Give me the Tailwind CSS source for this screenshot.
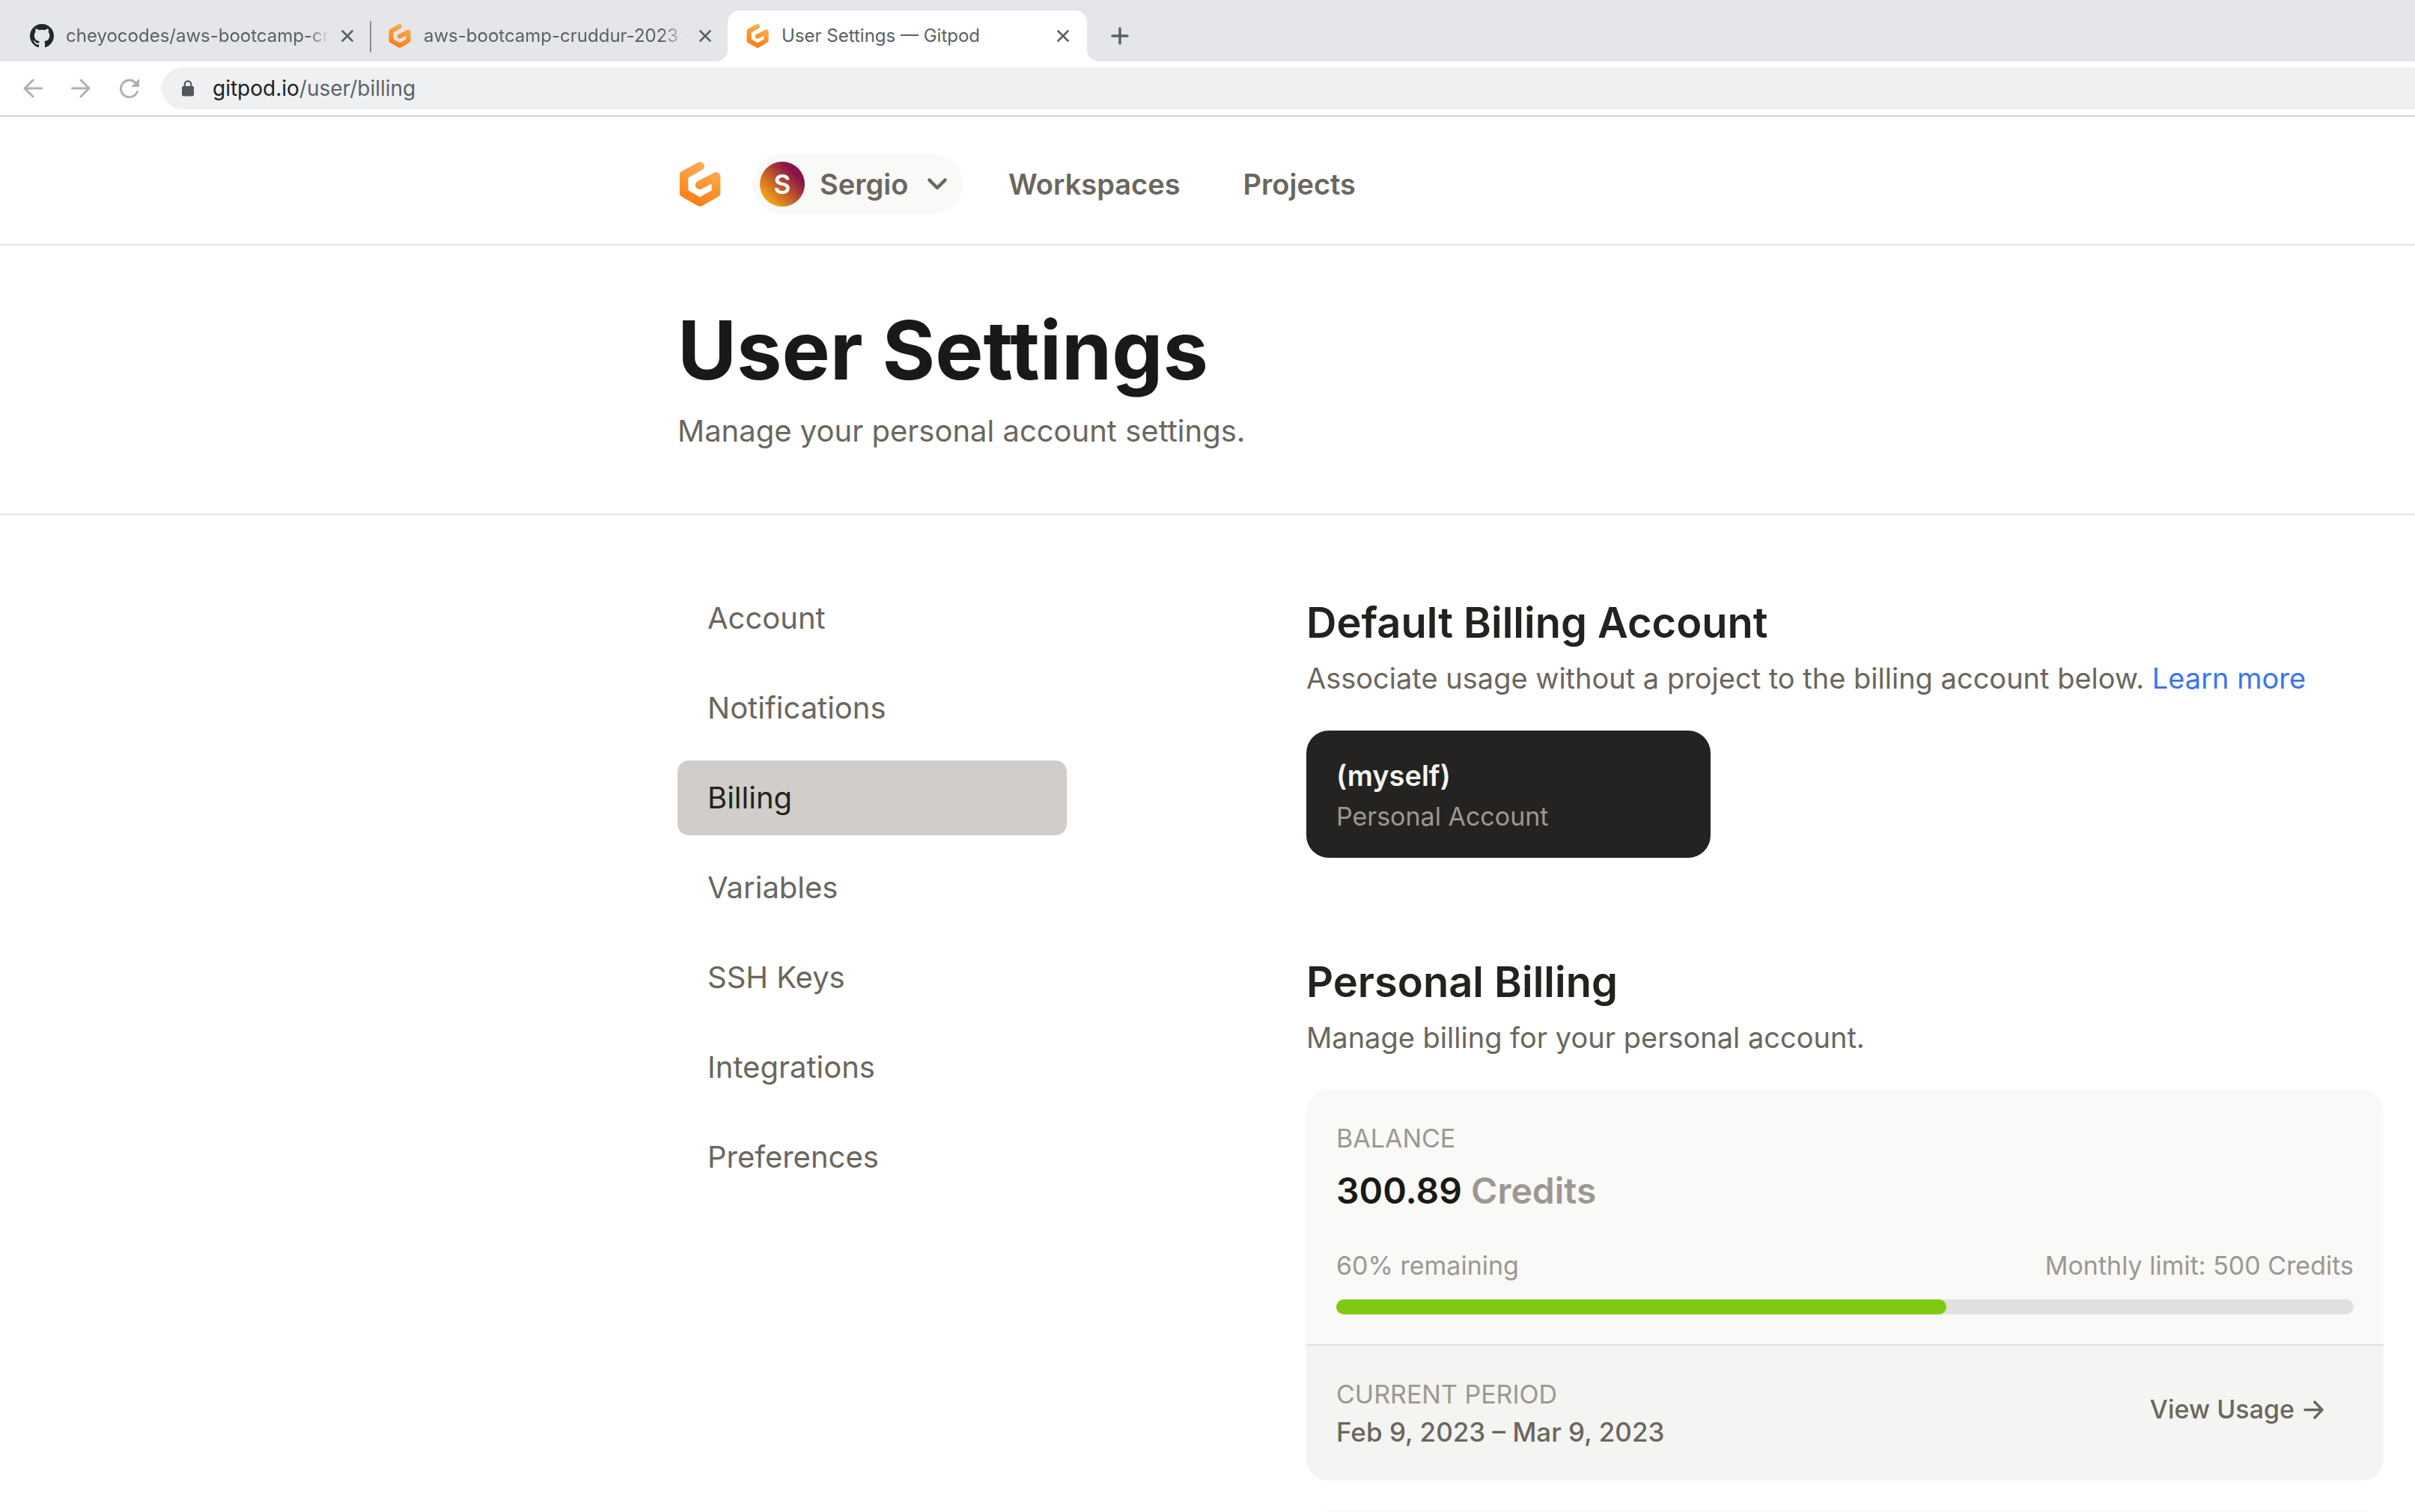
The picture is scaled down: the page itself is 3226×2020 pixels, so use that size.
<!DOCTYPE html>
<html lang="en">
<head>
<meta charset="utf-8">
<meta name="viewport" content="width=device-width, initial-scale=1">
<title>User Settings — Gitpod</title>
<script src="https://cdn.jsdelivr.net/npm/@tailwindcss/browser@4"></script>
</head>
<body class="flex h-screen flex-col overflow-hidden bg-white font-['Inter',sans-serif] text-[#6b665e]">

<!-- Shared shapes -->
<svg class="absolute size-0" aria-hidden="true">
  <defs>
    <linearGradient id="flame" gradientUnits="userSpaceOnUse" x1="150" y1="50" x2="90" y2="225">
      <stop offset="0" stop-color="#fbb058"/><stop offset="1" stop-color="#fb7c12"/>
    </linearGradient>
    <symbol id="gitpod" viewBox="36 47 168 181">
      <path d="M120 65 55.500 101V173L120 209.500 185 173V107L119 141" fill="none" stroke="url(#flame)" stroke-width="35" stroke-linecap="round" stroke-linejoin="round"/>
    </symbol>
    <symbol id="close" viewBox="0 0 16 16">
      <path d="M1.500 1.500 14.500 14.500M14.500 1.500 1.500 14.500" fill="none" stroke="currentColor" stroke-width="2.600" stroke-linecap="round"/>
    </symbol>
  </defs>
</svg>

<!-- Browser tabs -->
<div class="flex h-[82px] shrink-0 items-end bg-[#e5e6ea] text-[24px] leading-[32px] text-[#5b5f63]">
  <div class="flex h-[68px] w-[494px] shrink-0 items-center pl-10">
    <svg class="size-8 shrink-0 text-[#22272b]" viewBox="0 0 16 16" fill="currentColor"><path d="M8 0C3.580 0 0 3.580 0 8c0 3.540 2.290 6.530 5.470 7.590.400.070.550-.170.550-.380 0-.190-.010-.820-.010-1.490-2.010.370-2.530-.490-2.690-.940-.090-.230-.480-.940-.820-1.130-.280-.150-.680-.520-.010-.530.630-.010 1.080.580 1.230.820.720 1.210 1.870.870 2.330.660.070-.520.280-.870.510-1.070-1.780-.200-3.640-.890-3.640-3.950 0-.870.310-1.590.820-2.150-.080-.200-.360-1.020.080-2.120 0 0 .670-.210 2.200.820.640-.180 1.320-.270 2-.270s1.360.090 2 .270c1.530-1.040 2.200-.820 2.200-.820.440 1.100.160 1.920.080 2.120.510.560.820 1.270.820 2.150 0 3.070-1.870 3.750-3.650 3.950.290.250.540.730.540 1.480 0 1.070-.010 1.930-.010 2.200 0 .210.150.460.550.380A8.010 8.010 0 0 0 16 8c0-4.420-3.580-8-8-8z"/></svg>
    <span class="ml-4 w-[352px] overflow-hidden whitespace-nowrap [mask-image:linear-gradient(to_right,black_92%,transparent)]">cheyocodes/aws-bootcamp-cru</span>
    <button class="ml-4" aria-label="Close tab"><svg class="size-4"><use href="#close"/></svg></button>
  </div>
  <div class="mb-3 h-[42px] w-[2px] shrink-0 bg-[#8c9095]"></div>
  <div class="flex h-[68px] w-[476px] shrink-0 items-center pl-[23px]">
    <svg class="h-8 w-[30px] shrink-0"><use href="#gitpod"/></svg>
    <span class="ml-[17px] w-[352px] overflow-hidden whitespace-nowrap [mask-image:linear-gradient(to_right,black_90%,transparent)]">aws-bootcamp-cruddur-2023 ·</span>
    <button class="ml-4" aria-label="Close tab"><svg class="size-4"><use href="#close"/></svg></button>
  </div>
  <div class="relative flex h-[68px] w-[480px] shrink-0 items-center rounded-t-2xl bg-white pl-[25px]">
    <span class="absolute bottom-0 -left-4 size-4 bg-[radial-gradient(circle_at_0_0,transparent_16px,white_16px)]"></span>
    <span class="absolute -right-4 bottom-0 size-4 bg-[radial-gradient(circle_at_100%_0,transparent_16px,white_16px)]"></span>
    <svg class="h-8 w-[30px] shrink-0"><use href="#gitpod"/></svg>
    <span class="ml-[17px] w-[352px] overflow-hidden whitespace-nowrap">User Settings — Gitpod</span>
    <button class="ml-4" aria-label="Close tab"><svg class="size-4"><use href="#close"/></svg></button>
  </div>
  <button class="ml-8 flex h-[68px] items-center" aria-label="New tab">
    <svg class="size-6" viewBox="0 0 24 24" fill="none" stroke="currentColor" stroke-width="3.500" stroke-linecap="round"><path d="M12 2V22M2 12H22"/></svg>
  </button>
</div>

<!-- Toolbar -->
<div class="flex h-[74px] shrink-0 items-center border-b-2 border-[#d5d5d6] pl-[31px]">
  <div class="flex gap-[38px] text-[#b0b1b4]">
    <button aria-label="Back"><svg class="size-[26px]" viewBox="0 0 26 26" fill="none" stroke="currentColor" stroke-width="3" stroke-linecap="round" stroke-linejoin="round"><path d="M13 2 2 13 13 24M2 13H24.500"/></svg></button>
    <button aria-label="Forward"><svg class="size-[26px]" viewBox="0 0 26 26" fill="none" stroke="currentColor" stroke-width="3" stroke-linecap="round" stroke-linejoin="round"><path d="M13 2 24 13 13 24M24 13H1.500"/></svg></button>
    <button aria-label="Reload"><svg class="h-[26px] w-[28px]" viewBox="0 0 28 26"><path d="M21.500 5.200A11.300 11.300 0 1 0 24.300 17.500" fill="none" stroke="currentColor" stroke-width="3" stroke-linecap="round"/><path d="M27 0V11H16Z" fill="currentColor"/></svg></button>
  </div>
  <div class="ml-[29px] flex h-14 flex-1 items-center rounded-l-full bg-[#eff0f2] pl-[26px]">
    <svg class="h-[22px] w-[18px] shrink-0 text-[#54585d]" viewBox="0 0 18 22"><rect x="1" y="8" width="16" height="13.500" rx="2" fill="currentColor"/><path d="M4.800 9V5.500a4.200 4.200 0 0 1 8.400 0V9" fill="none" stroke="currentColor" stroke-width="2.200"/></svg>
    <a href="#" class="ml-6 text-[28px] leading-[40px] text-[#5f6368]"><span class="text-[#1c1d20]">gitpod.io</span>/user/billing</a>
  </div>
</div>

<!-- App navigation -->
<header class="flex h-[172px] shrink-0 items-start border-b-2 border-[#e2e2e2] pt-[50px] pl-[905px] text-[38px] leading-[60px] font-semibold">
  <a href="#" aria-label="Gitpod" class="flex h-20 w-[60px] items-center justify-center"><svg class="h-[60px] w-14"><use href="#gitpod"/></svg></a>
  <button class="ml-10 flex h-20 w-[282px] items-center rounded-full bg-[#f9f9f8] pl-[10px]">
    <span class="flex size-[60px] items-center justify-center rounded-full bg-[linear-gradient(45deg,#ef9a16_20%,#8b1347_75%)] text-[35px] text-white">S</span>
    <span class="ml-5">Sergio</span>
    <svg class="ml-[26px] h-4 w-[26px]" viewBox="0 0 26 16" fill="none" stroke="currentColor" stroke-width="4.500" stroke-linecap="round" stroke-linejoin="round"><path d="M2.500 2.500 13 13 23.500 2.500"/></svg>
  </button>
  <nav class="ml-[60px] flex h-20 items-center gap-[84px]">
    <a href="#">Workspaces</a>
    <a href="#">Projects</a>
  </nav>
</header>

<section class="shrink-0 border-b-2 border-[#e2e2e2] pt-20 pb-20 pl-[905px]">
  <h1 class="text-[108px] leading-[120px] font-bold text-[#1a1917]">User Settings</h1>
  <p class="mt-[18px] text-[40px] leading-[60px]">Manage your personal account settings.</p>
</section>

<main class="flex min-h-0 flex-1 items-start gap-80 overflow-hidden pt-[88px] pr-[42px] pl-[905px]">
  <nav class="flex w-[520px] shrink-0 flex-col gap-5 text-[40px] leading-[60px]">
    <a href="#" class="rounded-[15px] px-10 py-5">Account</a>
    <a href="#" class="rounded-[15px] px-10 py-5">Notifications</a>
    <a href="#" class="rounded-[15px] bg-[#d1cdca] px-10 py-5 text-[#242320]">Billing</a>
    <a href="#" class="rounded-[15px] px-10 py-5">Variables</a>
    <a href="#" class="rounded-[15px] px-10 py-5">SSH Keys</a>
    <a href="#" class="rounded-[15px] px-10 py-5">Integrations</a>
    <a href="#" class="rounded-[15px] px-10 py-5">Preferences</a>
  </nav>

  <div class="min-w-0 flex-1 pt-5 text-[34px] leading-[50px]">
    <h2 class="text-[56px] leading-[72px] font-semibold text-[#23221f]">Default Billing Account</h2>
    <p class="mt-2 text-[38px] leading-[60px]">Associate usage without a project to the billing account below. <a href="#" class="text-[#3b74f5]">Learn more</a></p>
    <button class="mt-10 block w-[540px] rounded-[30px] bg-[#242321] px-10 py-[30px] text-left">
      <span class="block text-[38px] leading-[60px] font-semibold text-[#f5f5f3]">(myself)</span>
      <span class="block text-[#9d9792]">Personal Account</span>
    </button>

    <h2 class="mt-[130px] text-[56px] leading-[72px] font-semibold text-[#23221f]">Personal Billing</h2>
    <p class="mt-2 text-[38px] leading-[60px]">Manage billing for your personal account.</p>

    <div class="mt-10 overflow-hidden rounded-[30px] bg-[#f9f9f8] text-[#9d9792]">
      <div class="p-10">
        <div>BALANCE</div>
        <div class="mt-[10px] text-[48px] leading-[70px] font-semibold"><span class="text-[#1a1917]">300.89</span> Credits</div>
        <div class="mt-10 flex justify-between"><span>60% remaining</span><span>Monthly limit: 500 Credits</span></div>
        <div class="mt-5 h-5 rounded-[10px] bg-[#e1e0de]" role="progressbar" aria-label="Credits remaining" aria-valuenow="60"><div class="h-5 rounded-[10px] bg-[#80c912]" style="width:60%"></div></div>
      </div>
      <div class="flex items-start justify-between border-t-2 border-[#dfdfdd] bg-[#f4f4f2] p-10">
        <div>
          <div>CURRENT PERIOD</div>
          <div class="text-[35px] font-medium text-[#6b665e]">Feb 9, 2023 – Mar 9, 2023</div>
        </div>
        <button class="flex items-center gap-3 px-10 py-5 font-medium text-[#6b665e]">View Usage
          <svg class="size-[27px]" viewBox="0 0 27 27" fill="none" stroke="currentColor" stroke-width="3.500" stroke-linecap="round" stroke-linejoin="round"><path d="M2 13.500H25M15 3 25 13.500 15 24"/></svg>
        </button>
      </div>
    </div>
    <div class="mt-10 h-80 rounded-[30px] bg-[#f9f9f8]"></div>
  </div>
</main>
</body>
</html>
